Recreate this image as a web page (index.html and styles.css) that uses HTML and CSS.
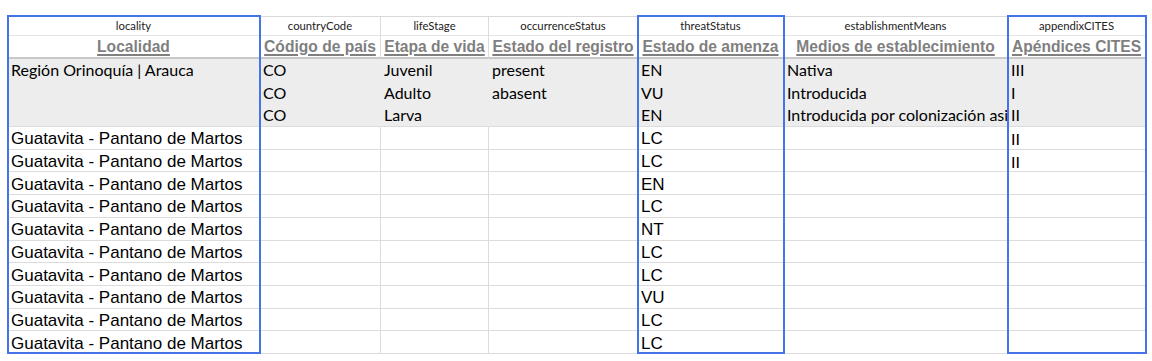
FILE: index.html
```html
<!DOCTYPE html>
<html lang="es">
<head>
<meta charset="utf-8">
<title>Hoja</title>
<link rel="stylesheet" href="styles.css">
</head>
<body>
<div class="wrap">
<div class="sheet">
  <div class="c h1">locality</div>
  <div class="c h1">countryCode</div>
  <div class="c h1">lifeStage</div>
  <div class="c h1">occurrenceStatus</div>
  <div class="c h1">threatStatus</div>
  <div class="c h1">establishmentMeans</div>
  <div class="c h1">appendixCITES</div>

  <div class="c h2"><span>Localidad</span></div>
  <div class="c h2"><span>Código de país</span></div>
  <div class="c h2"><span>Etapa de vida</span></div>
  <div class="c h2"><span>Estado del registro</span></div>
  <div class="c h2"><span>Estado de amenza</span></div>
  <div class="c h2"><span>Medios de establecimiento</span></div>
  <div class="c h2"><span>Apéndices CITES</span></div>

  <div class="c f">Región Orinoquía | Arauca</div>
  <div class="c f">CO</div>
  <div class="c f">Juvenil</div>
  <div class="c f">present</div>
  <div class="c f">EN</div>
  <div class="c f">Nativa</div>
  <div class="c f">III</div>

  <div class="c f"></div>
  <div class="c f">CO</div>
  <div class="c f">Adulto</div>
  <div class="c f">abasent</div>
  <div class="c f">VU</div>
  <div class="c f">Introducida</div>
  <div class="c f">I</div>

  <div class="c f last"></div>
  <div class="c f last">CO</div>
  <div class="c f last">Larva</div>
  <div class="c f last"></div>
  <div class="c f last">EN</div>
  <div class="c f last">Introducida por colonización asistida</div>
  <div class="c f last">II</div>

  <div class="c a">Guatavita - Pantano de Martos</div><div class="c"></div><div class="c"></div><div class="c"></div><div class="c a">LC</div><div class="c"></div><div class="c k">II</div>
  <div class="c a">Guatavita - Pantano de Martos</div><div class="c"></div><div class="c"></div><div class="c"></div><div class="c a">LC</div><div class="c"></div><div class="c k">II</div>
  <div class="c a">Guatavita - Pantano de Martos</div><div class="c"></div><div class="c"></div><div class="c"></div><div class="c a">EN</div><div class="c"></div><div class="c"></div>
  <div class="c a">Guatavita - Pantano de Martos</div><div class="c"></div><div class="c"></div><div class="c"></div><div class="c a">LC</div><div class="c"></div><div class="c"></div>
  <div class="c a">Guatavita - Pantano de Martos</div><div class="c"></div><div class="c"></div><div class="c"></div><div class="c a">NT</div><div class="c"></div><div class="c"></div>
  <div class="c a">Guatavita - Pantano de Martos</div><div class="c"></div><div class="c"></div><div class="c"></div><div class="c a">LC</div><div class="c"></div><div class="c"></div>
  <div class="c a">Guatavita - Pantano de Martos</div><div class="c"></div><div class="c"></div><div class="c"></div><div class="c a">LC</div><div class="c"></div><div class="c"></div>
  <div class="c a">Guatavita - Pantano de Martos</div><div class="c"></div><div class="c"></div><div class="c"></div><div class="c a">VU</div><div class="c"></div><div class="c"></div>
  <div class="c a">Guatavita - Pantano de Martos</div><div class="c"></div><div class="c"></div><div class="c"></div><div class="c a">LC</div><div class="c"></div><div class="c"></div>
  <div class="c a">Guatavita - Pantano de Martos</div><div class="c"></div><div class="c"></div><div class="c"></div><div class="c a">LC</div><div class="c"></div><div class="c"></div>
</div>
<div class="marks">
  <div class="hl hl-1"></div>
  <div class="hl hl-5"></div>
  <div class="hl hl-7"></div>
</div>
</div>
</body>
</html>
```

FILE: styles.css
```css
* { box-sizing: border-box; }

html, body {
  margin: 0;
  padding: 0;
  background: #ffffff;
}

body {
  padding: 16px 0 0 8px;
  font-family: "Lato", "Liberation Sans", sans-serif;
  color: #000;
}

.wrap {
  display: grid;
  width: 1138px;
}

.sheet,
.marks {
  grid-area: 1 / 1;
  display: grid;
  grid-template-columns: 252px 121px 108px 149px 146px 224px 138px;
}

.sheet {
  grid-template-rows: 19px 23px repeat(13, 22.7px);
  border-top: 1px solid #d9d9d9;
}

.marks {
  pointer-events: none;
  z-index: 2;
}

.c {
  border-right: 1px solid #dcdcdc;
  border-bottom: 1px solid #dcdcdc;
  display: flex;
  align-items: center;
  padding: 0 3px;
  overflow: hidden;
  white-space: nowrap;
  font-size: 16px;
  line-height: 1;
  min-width: 0;
}

.h1 {
  justify-content: center;
  font-family: "Lato", "Liberation Sans", sans-serif;
  font-size: 11.3px;
  color: #222;
  border-bottom-color: #e4e4e4;
}

.h2 {
  justify-content: center;
  padding: 0;
  font-family: "Liberation Sans", Arial, sans-serif;
  font-weight: bold;
  font-size: 15.6px;
  color: #7f7f7f;
  border-bottom: 2px solid #c8c8c8;
}

.h2 span {
  text-decoration: underline;
  text-decoration-thickness: 1.5px;
  text-underline-offset: 2px;
}

.f {
  background: #ededed;
  border-right-color: #ededed;
  border-bottom-color: #ededed;
  padding-top: 0;
}

.f.last {
  border-bottom-color: #dcdcdc;
}

.a {
  font-family: "Liberation Sans", Arial, sans-serif;
  font-size: 17px;
  padding-top: 2px;
}

.k {
  padding-top: 2px;
}

.hl {
  margin: -1px -1px 0 -1px;
  border: 2px solid #4573e8;
}

.hl-1 { grid-column: 1; }
.hl-5 { grid-column: 5; }
.hl-7 { grid-column: 7; }
```
